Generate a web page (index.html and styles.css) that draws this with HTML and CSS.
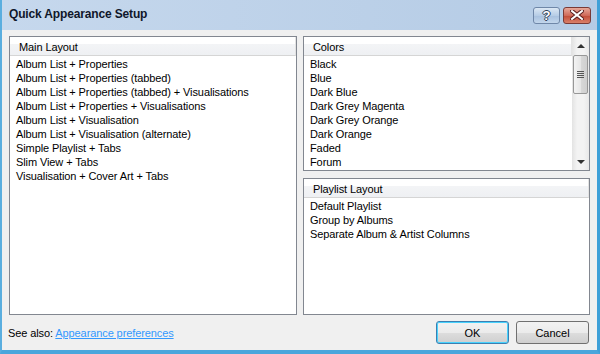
FILE: index.html
```html
<!DOCTYPE html>
<html lang="en">
<head>
  <meta charset="UTF-8">
  <title>Quick Appearance Setup</title>
  <link rel="stylesheet" href="styles.css">
</head>
<body>
  <div class="window">
    <div class="titlebar">
      <span class="title">Quick Appearance Setup</span>
      <div class="caption-buttons">
        <div class="cap help">?</div>
        <div class="cap close">
          <svg width="14" height="10" viewBox="0 0 14 10">
            <path d="M2 1 L12 9 M12 1 L2 9" stroke="#5a1e1e" stroke-width="4" stroke-linecap="square"/>
            <path d="M2 1 L12 9 M12 1 L2 9" stroke="#fff" stroke-width="2" stroke-linecap="square"/>
          </svg>
        </div>
      </div>
    </div>

    <div class="client">
      <div class="panes">
        <div class="list main-layout">
          <div class="list-inner">
            <div class="list-header">Main Layout</div>
            <ul class="items">
              <li>Album List + Properties</li>
              <li>Album List + Properties (tabbed)</li>
              <li>Album List + Properties (tabbed) + Visualisations</li>
              <li>Album List + Properties + Visualisations</li>
              <li>Album List + Visualisation</li>
              <li>Album List + Visualisation (alternate)</li>
              <li>Simple Playlist + Tabs</li>
              <li>Slim View + Tabs</li>
              <li>Visualisation + Cover Art + Tabs</li>
            </ul>
          </div>
        </div>

        <div class="list colors">
          <div class="list-inner">
            <div class="list-header">Colors</div>
            <ul class="items">
              <li>Black</li>
              <li>Blue</li>
              <li>Dark Blue</li>
              <li>Dark Grey Magenta</li>
              <li>Dark Grey Orange</li>
              <li>Dark Orange</li>
              <li>Faded</li>
              <li>Forum</li>
            </ul>
          </div>
          <div class="scrollbar">
            <div class="arrow up"></div>
            <div class="track">
              <div class="thumb"><span class="grip"></span></div>
            </div>
            <div class="arrow down"></div>
          </div>
        </div>

        <div class="list playlist-layout">
          <div class="list-inner">
            <div class="list-header">Playlist Layout</div>
            <ul class="items">
              <li>Default Playlist</li>
              <li>Group by Albums</li>
              <li>Separate Album &amp; Artist Columns</li>
            </ul>
          </div>
        </div>
      </div>

      <div class="footer">
        <span class="see-also">See also: <a href="#">Appearance preferences</a></span>
        <div class="actions">
          <button class="btn default">OK</button>
          <button class="btn">Cancel</button>
        </div>
      </div>
    </div>
  </div>
</body>
</html>
```

FILE: styles.css
```css
* {
  box-sizing: border-box;
  margin: 0;
  padding: 0;
}
body {
  width: 600px;
  height: 354px;
  overflow: hidden;
  font-family: "Liberation Sans", Arial, sans-serif;
  font-size: 11px;
  letter-spacing: -0.1px;
  color: #000;
  background: #fff;
}
.window {
  width: 600px;
  height: 354px;
  display: flex;
  flex-direction: column;
  background: linear-gradient(to right, #c6d8ed, #b4cbe5);
  border-right: 3px solid #3ea0d8;
  border-left: 2px solid #5aaedf;
  border-bottom: 4px solid #4aa6dc;
}
.titlebar {
  height: 30px;
  display: flex;
  align-items: center;
  justify-content: space-between;
  padding: 0 6px 2px 7px;
}
.title {
  font-weight: bold;
  font-size: 12px;
  letter-spacing: -0.15px;
  color: #10172a;
}
.caption-buttons {
  display: flex;
  gap: 3px;
  margin-top: 2px;
}
.cap {
  height: 17px;
  border-radius: 3px;
  display: flex;
  align-items: center;
  justify-content: center;
}
.help {
  width: 27px;
  border: 1px solid #6f87a8;
  background: linear-gradient(#dbe7f4, #b7cde6 50%, #a7c0de 51%, #c2d6ec);
  color: #fff;
  font-weight: bold;
  font-size: 13px;
  text-shadow: 1px 0 #2d3e57, -1px 0 #2d3e57, 0 1px #2d3e57, 0 -1px #2d3e57;
}
.close {
  width: 28px;
  border: 1px solid #7a3a36;
  background: linear-gradient(#e7a89a, #cf6a5a 50%, #c14a36 51%, #d9806a);
}
.client {
  flex: 1;
  display: flex;
  flex-direction: column;
  background: #f0f0f0;
  padding: 6px 7px 0 7px;
}
.panes {
  display: grid;
  grid-template-columns: 288px 287px;
  grid-template-rows: 135px 137px;
  column-gap: 6px;
  row-gap: 7px;
}
.list {
  background: #fff;
  border: 1px solid #828790;
  display: flex;
}
.main-layout {
  grid-row: 1 / span 2;
}
.list-inner {
  flex: 1;
}
.list-header {
  height: 19px;
  line-height: 20px;
  padding-left: 9px;
  border-bottom: 1px solid #d5d5d5;
  border-right: 1px solid #e3e3e3;
  background: linear-gradient(#ffffff, #ffffff 40%, #f3f4f6 41%, #eef0f3);
}
.items {
  list-style: none;
  padding: 1px 0 0 6px;
}
.items li {
  height: 14px;
  line-height: 14px;
  white-space: nowrap;
}
.scrollbar {
  width: 17px;
  display: flex;
  flex-direction: column;
  background: linear-gradient(to right, #e3e3e3, #f3f3f3 30%, #f3f3f3 70%, #e8e8e8);
}
.arrow {
  height: 17px;
  display: flex;
  align-items: center;
  justify-content: center;
}
.arrow::before {
  content: "";
  border-left: 4px solid transparent;
  border-right: 4px solid transparent;
}
.arrow.up::before {
  border-bottom: 4px solid #333;
}
.arrow.down::before {
  border-top: 4px solid #333;
}
.track {
  flex: 1;
  padding: 1px 0;
}
.thumb {
  height: 39px;
  margin: 0 1px;
  border: 1px solid #979797;
  border-radius: 2px;
  background: linear-gradient(to right, #f3f3f3, #e6e6e6 50%, #d8d8d8 51%, #cfcfcf);
  display: flex;
  align-items: center;
  justify-content: center;
}
.grip {
  width: 7px;
  height: 7px;
  background: repeating-linear-gradient(#555 0 1px, transparent 1px 2px);
}
.footer {
  flex: 1;
  display: flex;
  align-items: center;
  justify-content: space-between;
  padding: 0 1px 0 0;
  margin-left: -1px;
}
.see-also a {
  color: #3399ff;
  text-decoration: underline;
}
.actions {
  display: flex;
  gap: 7px;
}
.btn {
  width: 73px;
  height: 23px;
  font-family: "Liberation Sans", Arial, sans-serif;
  font-size: 11px;
  color: #000;
  border: 1px solid #707070;
  border-radius: 3px;
  background: linear-gradient(#f2f2f2, #ebebeb 50%, #dddddd 51%, #cfcfcf);
}
.btn.default {
  border-color: #3c7fb1;
  box-shadow: inset 0 0 0 1px #48d2fd;
}
```
